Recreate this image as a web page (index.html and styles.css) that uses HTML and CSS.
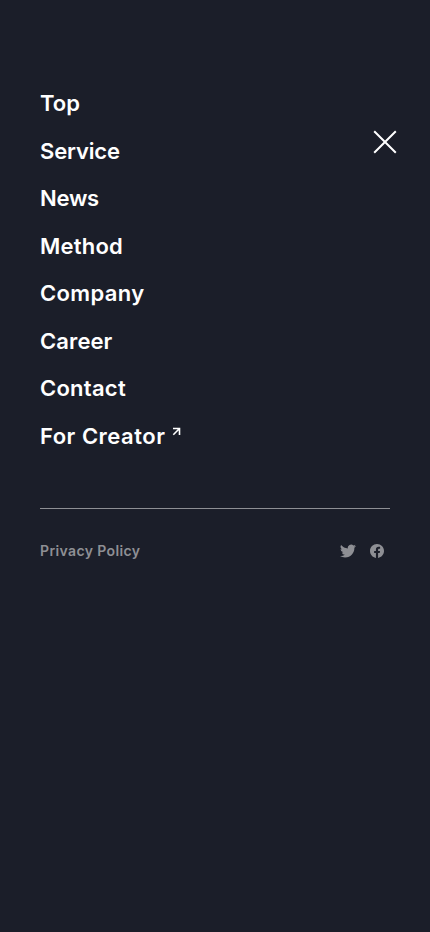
FILE: index.html
```html
<!DOCTYPE html>
<html lang="en">
<head>
    <meta charset="UTF-8">
    <meta name="viewport" content="width=device-width, initial-scale=1.0">
    <title>Menu</title>
    <link rel="stylesheet" href="styles.css">
</head>
<body>
    <button class="close" aria-label="Close">
        <svg width="24" height="24" viewBox="0 0 24 24"><path d="M1.2 1.2l21.6 21.6M22.8 1.2L1.2 22.8"/></svg>
    </button>
    <div class="menu">
        <nav>
            <ul class="menu-list">
                <li><a href="#">Top</a></li>
                <li><a class="service" href="#">Service</a></li>
                <li><a class="news" href="#">News</a></li>
                <li><a class="method" href="#">Method</a></li>
                <li><a class="company" href="#">Company</a></li>
                <li><a class="career" href="#">Career</a></li>
                <li><a class="contact" href="#">Contact</a></li>
                <li>
                    <a class="creator" href="#">For Creator</a>
                    <svg class="arrow" width="9" height="9" viewBox="0 0 9 9"><path d="M1 1.5h6.5V8M7.5 1.5L1.3 7.7"/></svg>
                </li>
            </ul>
        </nav>
        <div class="menu-footer">
            <a class="policy" href="#">Privacy Policy</a>
            <div class="sns">
                <a href="#" aria-label="Twitter">
                    <svg width="16" height="16" viewBox="0 0 24 24"><path d="M23.95 4.57a10 10 0 0 1-2.82.77 4.96 4.96 0 0 0 2.16-2.72c-.95.55-2 .95-3.12 1.18a4.92 4.92 0 0 0-8.38 4.48C7.69 8.09 4.07 6.13 1.64 3.16a4.92 4.92 0 0 0 1.52 6.57 4.9 4.9 0 0 1-2.23-.61v.06a4.92 4.92 0 0 0 3.95 4.83 5 5 0 0 1-2.21.08 4.94 4.94 0 0 0 4.6 3.42A9.87 9.87 0 0 1 0 19.54a13.99 13.99 0 0 0 7.55 2.21c9.05 0 14-7.5 14-13.98 0-.21 0-.42-.02-.63a9.94 9.94 0 0 0 2.42-2.57z"/></svg>
                </a>
                <a href="#" aria-label="Facebook">
                    <svg width="14" height="14" viewBox="0 0 24 24"><path d="M24 12.07C24 5.45 18.63.07 12 .07S0 5.45 0 12.07c0 5.99 4.39 10.95 10.13 11.85v-8.38H7.08v-3.47h3.05V9.43c0-3.01 1.79-4.67 4.53-4.67 1.31 0 2.69.23 2.69.23v2.96h-1.52c-1.49 0-1.96.93-1.96 1.87v2.25h3.33l-.53 3.47h-2.8v8.38C19.61 23.02 24 18.06 24 12.07z"/></svg>
                </a>
            </div>
        </div>
    </div>
</body>
</html>
```
FILE: styles.css
```css
body {
    margin: 0;
    background-color: #1b1e29;
    color: #fff;
    font-family: Inter, "Liberation Sans", sans-serif;
}
a {
    color: inherit;
    text-decoration: none;
}
svg {
    display: block;
}
.close {
    position: absolute;
    top: 130px;
    right: 33px;
    padding: 0;
    border: none;
    background: none;
}
.close path {
    fill: none;
    stroke: #fff;
    stroke-width: 2;
}
.menu {
    padding: 80px 40px 0;
}
.menu-list {
    margin: 0;
    padding: 0 0 48px;
    list-style: none;
    font-size: 22px;
    font-weight: 600;
}
.menu-list li {
    display: flex;
    height: 47.5px;
    line-height: 47.5px;
}
.service {
    letter-spacing: -0.15px;
}
.news {
    letter-spacing: -0.25px;
}
.method {
    letter-spacing: 0.2px;
}
.company {
    letter-spacing: 0.35px;
}
.career {
    letter-spacing: 0.1px;
}
.contact {
    letter-spacing: 0.25px;
}
.creator {
    letter-spacing: 0.5px;
}
.arrow {
    margin: 14px 0 0 7px;
}
.arrow path {
    fill: none;
    stroke: #fff;
    stroke-width: 1.6;
}
.menu-footer {
    display: flex;
    justify-content: space-between;
    align-items: center;
    padding: 32px 6px 0 0;
    border-top: 1px solid #8e8f94;
    color: #8e8f94;
}
.policy {
    font-size: 14px;
    font-weight: 600;
    line-height: 20px;
    letter-spacing: 0.38px;
}
.sns {
    display: flex;
    align-items: center;
    gap: 14px;
}
.sns path {
    fill: currentColor;
}
```
